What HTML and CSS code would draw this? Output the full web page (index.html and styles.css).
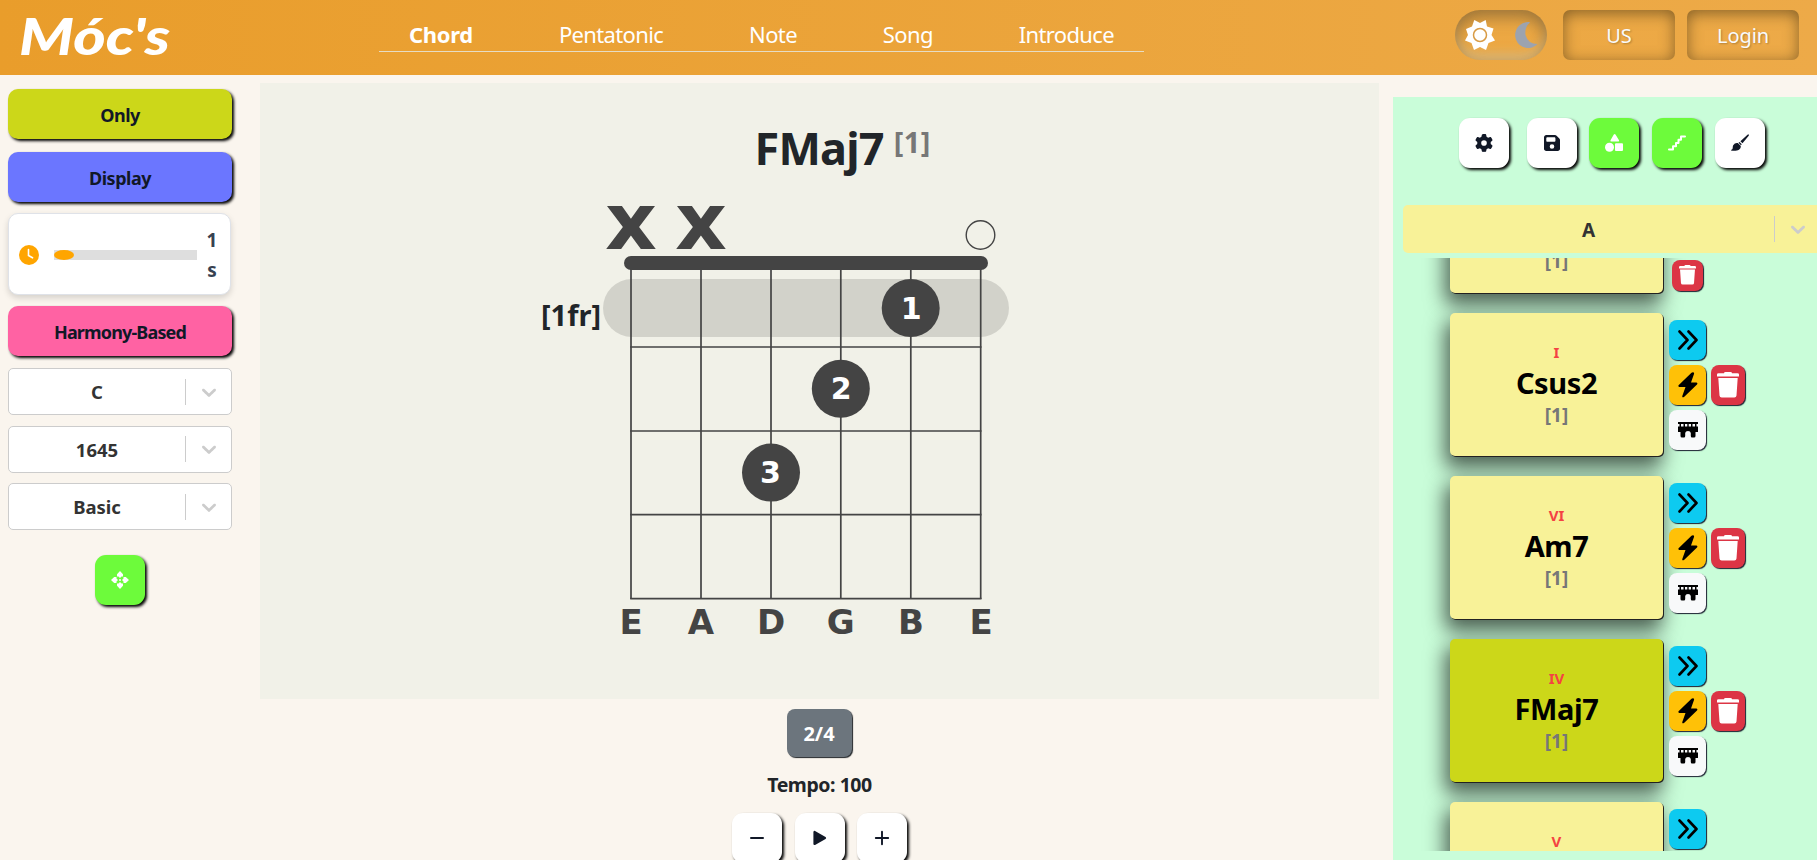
FILE: index.html
```html
<!DOCTYPE html>
<html lang="en">
<head>
<meta charset="utf-8">
<title>Móc's</title>
<link rel="stylesheet" href="styles.css">
</head>
<body>
<svg class="defs" width="0" height="0">
  <symbol id="i-trash" viewBox="0 0 22 26"><path d="M7 1.200Q7 0 8.500 0H13.500Q15 0 15 1.200H20.500Q22 1.200 22 2.500V4.600H0V2.500Q0 1.200 1.500 1.200H7ZM1.300 6H20.700L19.500 23.500Q19.300 25.500 17.300 25.500H4.700Q2.700 25.500 2.500 23.500Z"/></symbol>
  <symbol id="i-skip" viewBox="0 0 20 20"><path d="M1.500 1.500 9.500 10 1.500 18.500M10.500 1.500 18.500 10 10.500 18.500" fill="none" stroke="currentColor" stroke-width="2.600" stroke-linecap="round" stroke-linejoin="round"/></symbol>
  <symbol id="i-bolt" viewBox="0 0 20 26"><path d="M14.800.2Q16.500.2 16 2L13 10.500H18.500Q20 11 19 12.500L6 25Q4 26 4.300 24L7.500 15H1.200Q-.3 14.500.8 13L13.500.8Q14.200.2 14.800.2Z"/></symbol>
  <symbol id="i-bridge" viewBox="0 0 20 16"><path d="M0 0H20V2H18.500V4.500H20V10H17.500V14Q17.500 15.500 16 15.500H14Q12.800 15.500 12.800 14V11Q12.500 9 10 9T7.200 11V14Q7.200 15.500 6 15.500H4Q2.500 15.500 2.500 14V10H0V4.500H1.500V2H0ZM3 2V4.500H5.500V2ZM7 2V4.500H9.300V2ZM10.700 2V4.500H13V2ZM14.500 2V4.500H17V2Z" fill-rule="evenodd"/></symbol>
  <symbol id="i-chev" viewBox="0 0 20 20"><path d="M4.516 7.548c.436-.446 1.043-.481 1.576 0L10 11.295l3.908-3.747c.533-.481 1.141-.446 1.574 0 .436.445.408 1.197 0 1.615-.406.418-4.695 4.502-4.695 4.502a1.095 1.095 0 0 1-1.576 0S4.924 9.581 4.516 9.163s-.436-1.170 0-1.615z"/></symbol>
</svg>

<header class="topbar">
  <svg class="logo" width="162" height="64" viewBox="0 0 162 64"><text x="2" y="47" textLength="151" lengthAdjust="spacingAndGlyphs">Móc's</text></svg>
  <nav class="nav">
    <a class="active">Chord</a><a>Pentatonic</a><a>Note</a><a>Song</a><a>Introduce</a>
  </nav>
  <div class="actions">
    <div class="toggle">
      <svg width="32" height="32" viewBox="-16 -16 32 32"><path d="M0-12 5.700-15 7-8.500 13.500-6.500 11.500 0 15 5.500 8.500 8 6 15 0 12-6 15-8.500 8-15 5.500-12 0-14-6-8-8.500-5.700-15Z" fill="#fff"/><circle r="6.500" fill="#fff" stroke="#d89b45" stroke-width="1.500"/></svg>
      <svg width="23" height="26" viewBox="0 0 23 26"><path d="M14 0A13 13 0 1 0 22.500 22Q13 22 10.500 13Q9.500 5 15 .5Z" fill="#9ca3af"/></svg>
    </div>
    <button class="pill">US</button>
    <button class="pill">Login</button>
  </div>
</header>

<div class="layout">
  <aside class="side">
    <button class="wide lime">Only</button>
    <button class="wide blue">Display</button>
    <div class="timer">
      <svg width="20" height="20" viewBox="0 0 20 20"><circle cx="10" cy="10" r="10" fill="orange"/><path d="M9.500 4.500V10.500L13.500 12.800" fill="none" stroke="#fff" stroke-width="1.600" stroke-linecap="round"/></svg>
      <div class="track"><div class="thumb"></div></div>
      <div class="secs"><span>1</span><span>s</span></div>
    </div>
    <button class="wide pink">Harmony-Based</button>
    <div class="select"><span>C</span><i></i><svg width="24" height="24"><use href="#i-chev"/></svg></div>
    <div class="select"><span>1645</span><i></i><svg width="24" height="24"><use href="#i-chev"/></svg></div>
    <div class="select"><span>Basic</span><i></i><svg width="24" height="24"><use href="#i-chev"/></svg></div>
    <button class="sq green expand"><svg width="18" height="18" viewBox="0 0 18 18" fill="#fff"><path d="M9 0 12 3.200V5.500H10.500L9 7 7.500 5.500H6V3.200ZM9 18 12 14.800V12.500H10.500L9 11 7.500 12.500H6V14.800ZM0 9 3.200 6H5.500V7.500L7 9 5.500 10.500V12H3.200ZM18 9 14.800 6H12.500V7.500L11 9 12.500 10.500V12H14.800Z"/><circle cx="9" cy="9" r="1"/></svg></button>
  </aside>

  <main class="main">
    <section class="stage">
      <h1 class="title"><span>FMaj7</span><sup>[1]</sup></h1>
      <svg class="chart" width="520" height="450" viewBox="520 195 520 450">
        <rect x="603" y="279" width="406" height="58" rx="29" fill="#d2d2ca"/>
        <g stroke="#444" stroke-width="1.700" fill="none">
          <path d="M631 263V599M701 263V599M771 263V599M840.800 263V599M910.800 263V599M980.700 263V599"/>
          <path d="M630.200 347H981.500M630.200 431H981.500M630.200 514.700H981.500M630.200 598.700H981.500"/>
          <circle cx="980.500" cy="235" r="14.300" stroke-width="1.400"/>
        </g>
        <rect x="624" y="256" width="364" height="14" rx="7" fill="#444"/>
        <g fill="#444"><circle cx="910.700" cy="308" r="29"/><circle cx="840.800" cy="388.700" r="29"/><circle cx="771" cy="472.600" r="29"/></g>
        <g class="finger"><text x="911.200" y="319">1</text><text x="841.300" y="399">2</text><text x="770.500" y="482.700">3</text></g>
        <g class="mute"><text x="605" y="249" textLength="52" lengthAdjust="spacingAndGlyphs">x</text><text x="675" y="249" textLength="52" lengthAdjust="spacingAndGlyphs">x</text></g>
        <g class="tuning"><text x="631" y="634">E</text><text x="701" y="634">A</text><text x="771" y="634">D</text><text x="840.800" y="634">G</text><text x="911" y="634">B</text><text x="981" y="634">E</text></g>
        <text class="fret" x="541" y="326" textLength="60" lengthAdjust="spacingAndGlyphs">[1fr]</text>
      </svg>
    </section>
    <section class="player">
      <button class="meter">2/4</button>
      <div class="tempo">Tempo: 100</div>
      <div class="controls">
        <button class="sq"><svg width="14" height="14"><path d="M1 7H13" stroke="#111827" stroke-width="2" stroke-linecap="round"/></svg></button>
        <button class="sq"><svg width="14" height="16"><path d="M1.500 2V14L12 8Z" fill="#111827" stroke="#111827" stroke-width="2.200" stroke-linejoin="round"/></svg></button>
        <button class="sq"><svg width="14" height="14"><path d="M.8 7H13.200M7 .8V13.200" stroke="#111827" stroke-width="1.900" stroke-linecap="round"/></svg></button>
      </div>
    </section>
  </main>

  <aside class="panel">
    <div class="tools">
      <button class="sq gear"><svg width="18" height="18" viewBox="0 0 512 512"><path d="M495.900 166.600c3.200 8.700.5 18.400-6.400 24.600l-43.300 39.400c1.100 8.300 1.700 16.800 1.700 25.400s-.6 17.100-1.700 25.400l43.300 39.400c6.900 6.200 9.600 15.900 6.400 24.600-4.400 11.900-9.700 23.300-15.800 34.300l-4.700 8.100c-6.600 11-14 21.400-22.100 31.200-5.900 7.200-15.700 9.600-24.500 6.800l-55.700-17.700c-13.400 10.300-28.200 18.900-44 25.400l-12.500 57.100c-2 9.100-9 16.300-18.200 17.800-13.800 2.300-28 3.500-42.500 3.500s-28.700-1.200-42.500-3.500c-9.200-1.500-16.200-8.700-18.200-17.800l-12.500-57.100c-15.800-6.500-30.600-15.100-44-25.400L83.100 425.900c-8.800 2.800-18.600.3-24.500-6.800-8.100-9.800-15.500-20.200-22.100-31.200l-4.700-8.100c-6.100-11-11.400-22.400-15.800-34.300-3.200-8.700-.5-18.400 6.400-24.600l43.300-39.400C64.600 273.100 64 264.600 64 256s.6-17.100 1.700-25.400L22.400 191.200c-6.900-6.200-9.600-15.900-6.400-24.600 4.400-11.900 9.700-23.300 15.800-34.300l4.700-8.100c6.600-11 14-21.400 22.100-31.200 5.900-7.200 15.700-9.600 24.500-6.800l55.700 17.700c13.400-10.300 28.200-18.900 44-25.400l12.500-57.100c2-9.100 9-16.300 18.200-17.800C227.300 1.200 241.500 0 256 0s28.700 1.200 42.500 3.500c9.200 1.500 16.200 8.700 18.200 17.800l12.500 57.100c15.800 6.500 30.600 15.100 44 25.400l55.700-17.700c8.800-2.800 18.600-.3 24.500 6.800 8.100 9.800 15.500 20.200 22.100 31.200l4.700 8.100c6.100 11 11.400 22.400 15.800 34.300zM256 336a80 80 0 1 0 0-160 80 80 0 1 0 0 160z" fill="#111827"/></svg></button>
      <button class="sq"><svg width="16" height="18" viewBox="0 32 448 448"><path d="M64 32C28.700 32 0 60.700 0 96V416c0 35.300 28.700 64 64 64H384c35.300 0 64-28.700 64-64V173.300c0-17-6.700-33.300-18.700-45.300L352 50.700C340 38.700 323.700 32 306.700 32H64zm0 96c0-17.700 14.300-32 32-32H288c17.700 0 32 14.300 32 32v64c0 17.700-14.300 32-32 32H96c-17.700 0-32-14.300-32-32V128zM224 288a64 64 0 1 1 0 128 64 64 0 1 1 0-128z" fill="#111827"/></svg></button>
      <button class="sq green"><svg width="18" height="18" viewBox="0 0 18 18" fill="#fff"><path d="M8.800.6Q9.700-.4 10.500.6L14 6.300Q14.500 7.500 13.300 7.500H6.300Q5 7.500 5.500 6.300ZM11 9.200H17Q18 9.200 18 10.200V16Q18 17 17 17H11Q10 17 10 16V10.200Q10 9.200 11 9.200Z"/><circle cx="4.500" cy="13.200" r="4.500"/></svg></button>
      <button class="sq green stairs"><svg width="18" height="16" viewBox="0 0 18 16"><path d="M1 14.500H5V11.200H8V8H10.500V4.800H13V1.500H17" fill="none" stroke="#fff" stroke-width="2" stroke-linecap="round" stroke-linejoin="round"/></svg></button>
      <button class="sq"><svg width="18" height="18" viewBox="0 0 18 18" fill="#111827"><path d="M17.700.4Q18.300 1 17.500 2L11.500 9.300 9.400 7.200 16.500.8Q17.200 0 17.700.4ZM8.500 8 10.800 10.300 9.900 11.200 7.500 8.800ZM6.800 9.100 9.800 12C10 16.500 5 17.300 0 16.500V15.800C2.500 15.500 1.200 13.500 2.200 11.200Q4 8.500 6.800 9.100Z"/></svg></button>
    </div>
    <div class="keysel"><span>A</span><i></i><svg width="24" height="24"><use href="#i-chev"/></svg></div>
    <div class="list">
      <div class="row">
        <div class="card"><small>VI</small><b>Am</b><em>[1]</em></div>
        <div class="ops single"><button class="mini red"><svg width="17" height="20"><use href="#i-trash"/></svg></button></div>
      </div>
      <div class="row">
        <div class="card"><small>I</small><b>Csus2</b><em>[1]</em></div>
        <div class="ops"><button class="mini cyan"><svg width="20" height="20"><use href="#i-skip"/></svg></button><button class="mini amber"><svg width="20" height="26"><use href="#i-bolt"/></svg></button><button class="mini light"><svg width="20" height="16"><use href="#i-bridge"/></svg></button></div>
        <button class="mini red"><svg width="22" height="26"><use href="#i-trash"/></svg></button>
      </div>
      <div class="row">
        <div class="card"><small>VI</small><b>Am7</b><em>[1]</em></div>
        <div class="ops"><button class="mini cyan"><svg width="20" height="20"><use href="#i-skip"/></svg></button><button class="mini amber"><svg width="20" height="26"><use href="#i-bolt"/></svg></button><button class="mini light"><svg width="20" height="16"><use href="#i-bridge"/></svg></button></div>
        <button class="mini red"><svg width="22" height="26"><use href="#i-trash"/></svg></button>
      </div>
      <div class="row">
        <div class="card current"><small>IV</small><b>FMaj7</b><em>[1]</em></div>
        <div class="ops"><button class="mini cyan"><svg width="20" height="20"><use href="#i-skip"/></svg></button><button class="mini amber"><svg width="20" height="26"><use href="#i-bolt"/></svg></button><button class="mini light"><svg width="20" height="16"><use href="#i-bridge"/></svg></button></div>
        <button class="mini red"><svg width="22" height="26"><use href="#i-trash"/></svg></button>
      </div>
      <div class="row">
        <div class="card"><small>V</small></div>
        <div class="ops"><button class="mini cyan"><svg width="20" height="20"><use href="#i-skip"/></svg></button></div>
      </div>
    </div>
  </aside>
</div>
</body>
</html>
```
FILE: styles.css
```css
* { box-sizing: border-box; }
body { margin: 0; height: 860px; overflow: hidden; background: #faf5ee; color: #212529; font-family: "Noto Sans", "Open Sans", sans-serif; }
button { border: 0; padding: 0; margin: 0; font: inherit; color: inherit; display: flex; align-items: center; justify-content: center; }
svg { display: block; flex: none; overflow: visible; }
.defs { position: absolute; }

.topbar { height: 75px; display: flex; align-items: flex-start; background: linear-gradient(90deg, #e99d2b, #edaa48); }
.logo { margin-left: 17px; margin-top: 8px; }
.logo text { font: italic 900 51px Lato, sans-serif; fill: #fff; }
.nav { width: 765px; height: 52px; margin-left: 200px; padding: 19px 30px 0; display: flex; justify-content: space-between; border-bottom: 1px solid #e6dcc4; color: #fff; font-size: 22px; line-height: 30px; letter-spacing: -.65px; }
.nav .active { font-weight: 700; letter-spacing: -.3px; }
.actions { display: flex; gap: 12px; margin: 10px 18px 0 auto; }
.toggle { width: 92px; height: 50px; margin-right: 4px; padding: 0 9px; border-radius: 25px; display: flex; align-items: center; justify-content: space-between; box-shadow: inset 0 7px 16px rgba(90, 75, 50, .55), inset 0 -8px 10px rgba(215, 190, 140, .6); }
.pill { width: 112px; height: 50px; border-radius: 7px; background: transparent; color: #f8fafc; font-size: 20px; letter-spacing: -.1px; text-shadow: 1px 1px 2px rgba(0, 0, 0, .25); box-shadow: inset 0 3px 15px rgba(90, 65, 25, .7); }

.layout { display: flex; height: 785px; }
.side { width: 260px; padding: 14px 28px 0 8px; display: flex; flex-direction: column; }
.wide { width: 224px; height: 50px; padding-top: 2px; border-radius: 10px; font-weight: 700; font-size: 18px; letter-spacing: -.85px; color: #111827; box-shadow: 2px 2px 3px #000; flex: none; }
.lime { background: #ccd719; letter-spacing: -.5px; }
.blue { background: #6b76ff; margin-top: 13px; letter-spacing: -.5px; }
.pink { background: #ff62a3; margin-top: 11px; margin-bottom: 12px; }
.timer { width: 223px; height: 82px; margin-top: 11px; padding: 2px 13px 0 10px; border: 1px solid #dfe2e8; border-radius: 10px; background: #fff; display: flex; align-items: center; box-shadow: 0 3px 6px rgba(0, 0, 0, .15); }
.track { width: 143px; height: 10px; margin-left: 15px; background: #dedede; }
.thumb { width: 20px; height: 10px; border-radius: 50%; background: orange; }
.secs { margin-left: auto; width: 10px; display: flex; flex-direction: column; align-items: center; font-size: 19px; line-height: 30px; font-weight: 700; color: #374151; }
.select { width: 224px; height: 47px; margin-bottom: 10.500px; flex: none; border: 1px solid #ccc; border-radius: 5px; background: #fff; display: flex; align-items: center; color: #333; font-weight: 700; font-size: 18.500px; fill: #ccc; }
.select span { width: 176px; text-align: center; }
.select i, .keysel i { width: 1px; height: 26px; background: #ccc; }
.select svg { margin-left: 11px; }
.sq { width: 50px; height: 50px; flex: none; border-radius: 11px; background: #fff; box-shadow: 2px 2px 3px #000; }
.green { background: #6dfb3b; }
.expand { margin: 14px 0 0 87px; }

.main { width: 1119px; padding-top: 8px; }
.stage { height: 616px; background: #f1f1e8; }
.title { margin: 0; height: 112px; padding: 34px 0 0 494.500px; display: flex; font-size: 45px; line-height: 61px; font-weight: 700; letter-spacing: -.8px; }
.title sup { margin: -6px 0 0 10px; font-size: 29px; line-height: 61px; font-weight: 700; color: #777; vertical-align: baseline; letter-spacing: .4px; }
.chart { margin-left: 260px; }
.finger { font: 700 30px "DejaVu Sans", sans-serif; fill: #fff; text-anchor: middle; }
.mute { font: 700 78px "DejaVu Sans", sans-serif; fill: #444; }
.tuning { font: 700 34px "DejaVu Sans", sans-serif; fill: #444; text-anchor: middle; }
.fret { font-size: 29px; font-weight: 700; fill: #212529; }
.player { display: flex; flex-direction: column; align-items: center; padding-top: 10px; }
.meter { width: 65px; height: 48px; margin-right: 1px; border-radius: 8px; background: #6c757d; color: #fff; font-weight: 700; font-size: 20px; box-shadow: 1px 1px 1px #212529; }
.tempo { margin-top: 14px; height: 28px; line-height: 28px; font-size: 19.500px; font-weight: 700; letter-spacing: -.45px; }
.controls { display: flex; gap: 12.500px; margin-top: 14px; }

.panel { width: 424px; margin: 22px 0 0 14px; padding-top: 21px; background: #c9fdd9; height: 763px; }
.tools { display: flex; gap: 12.700px; padding-left: 66px; }
.gear { margin-right: 5px; }
.keysel { height: 48px; margin: 37px 0 0 10px; border-radius: 5px 0 0 5px; background: #f8f298; display: flex; align-items: center; font-size: 19px; font-weight: 700; color: #333; fill: #ccc; }
.keysel span { width: 371px; padding-top: 2px; text-align: center; }
.keysel svg { margin-left: 11px; }
.list { height: 593px; margin-top: 5px; overflow: hidden; display: flex; flex-direction: column; justify-content: flex-start; padding-left: 57px; }
.row { display: flex; align-items: center; height: 143px; flex: none; margin-bottom: 20px; }
.row:first-child { margin-top: -108px; }
.row:first-child .card { padding-top: 35px; }
.card { width: 213px; height: 143px; padding-top: 26px; border-radius: 5px; background: #f8f298; display: flex; flex-direction: column; align-items: center; color: #000; box-shadow: 1px 1px 0 #222, -3px 10px 20px 2px rgba(0, 0, 0, .62); }
.card small { font-size: 15px; line-height: 26px; height: 24px; color: #f44343; font-weight: 700; }
.card b { font-size: 29px; line-height: 40px; height: 40px; font-weight: 700; letter-spacing: -.4px; }
.card em { font-style: normal; font-weight: 700; font-size: 19px; line-height: 24px; color: #777; }
.current { background: #ccd719; }
.ops { height: 130px; margin-left: 6px; display: flex; flex-direction: column; gap: 5px; }
.mini { width: 37px; height: 40px; border-radius: 8px; color: #000; flex: none; box-shadow: 1px 1px 1px #1b2030; }
.cyan { background: #0dcaf0; }
.amber { background: #ffc107; }
.light { background: #f8f9fa; }
.red { width: 34px; margin-left: 5px; background: #dc3545; fill: #fff; }
.single { height: 66px; margin: 76px 0 0 9px; }
.single .red { width: 31px; height: 31px; margin: 33px 0 0; }
```
